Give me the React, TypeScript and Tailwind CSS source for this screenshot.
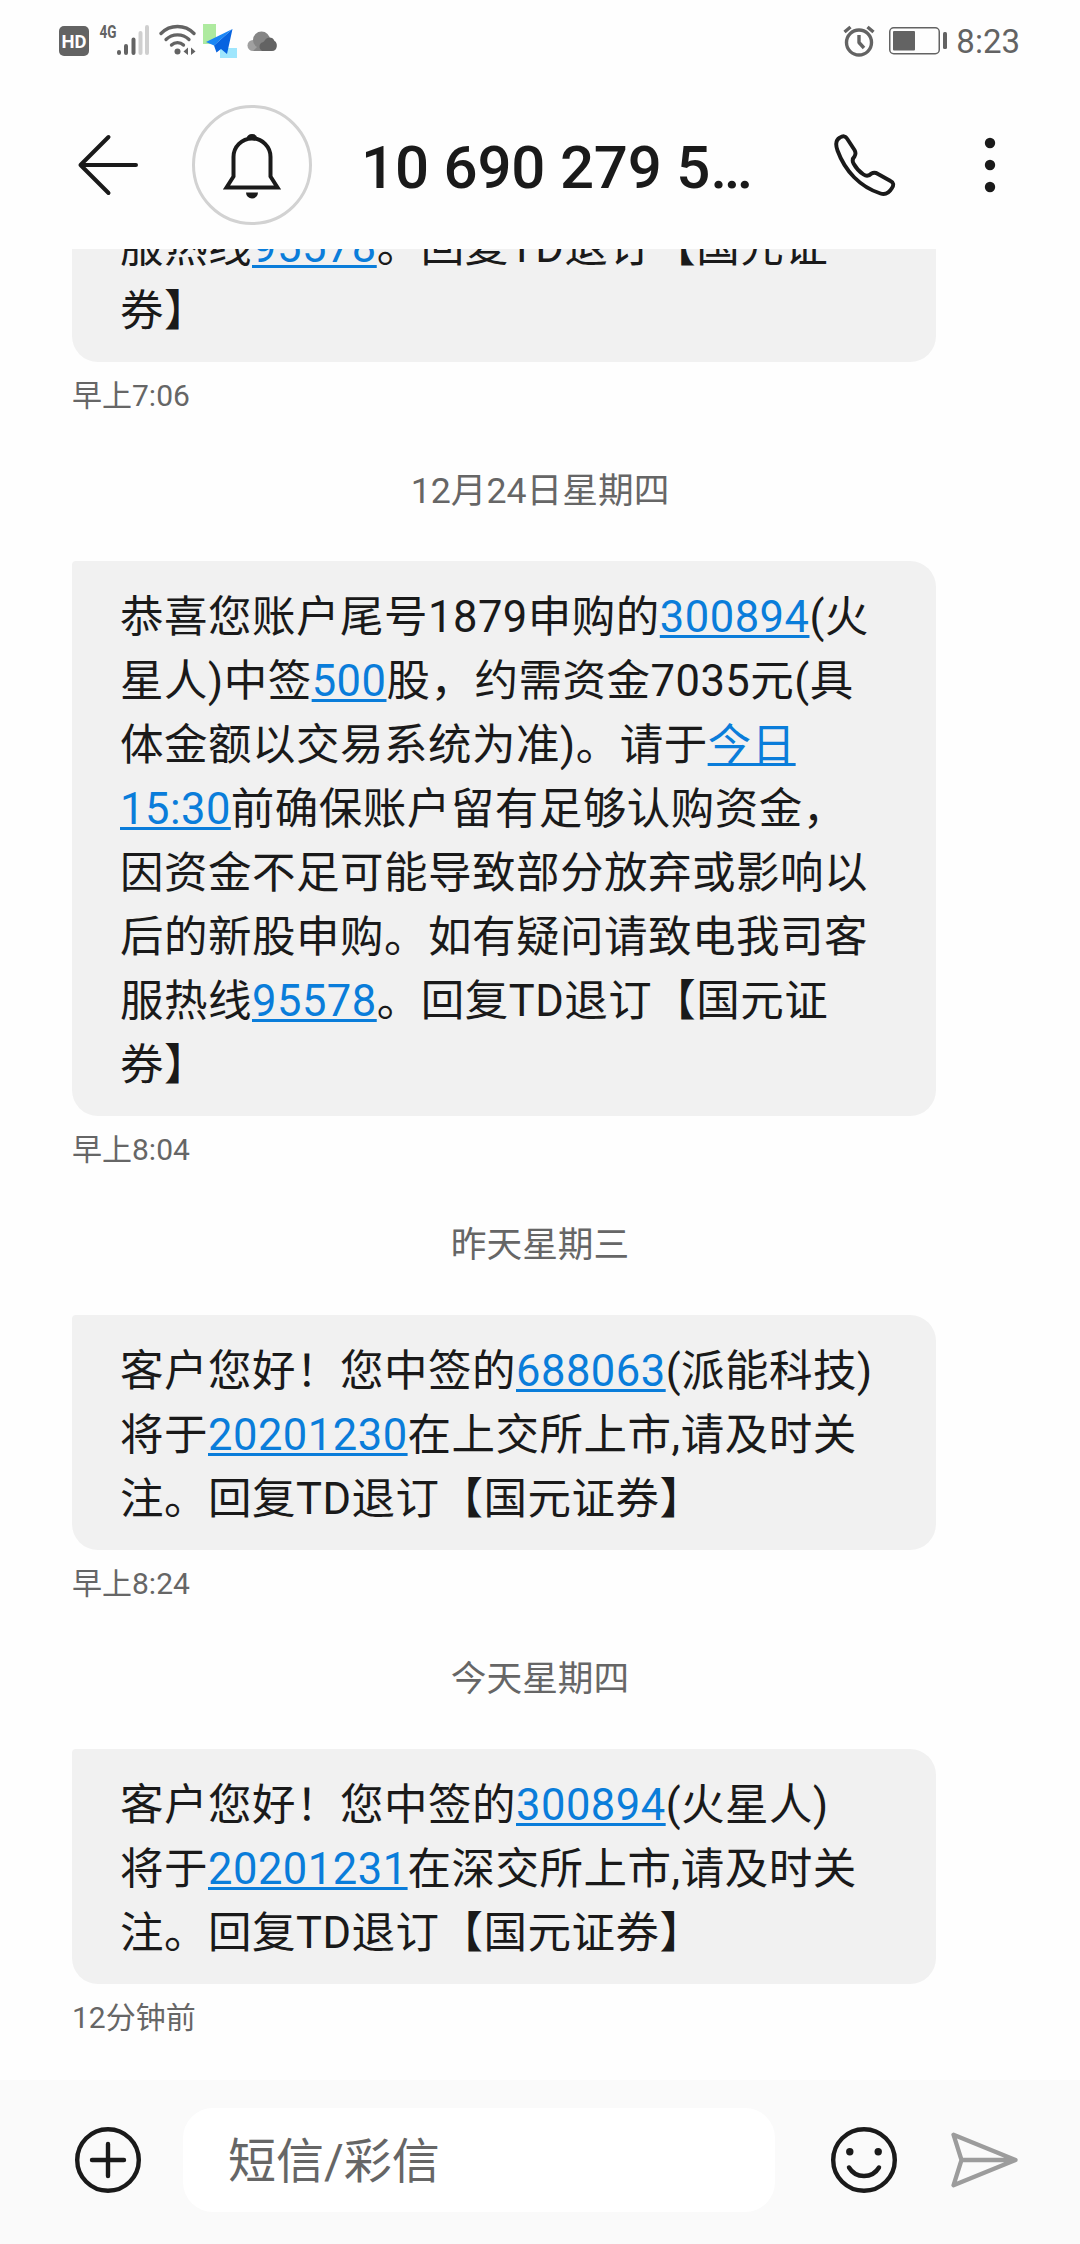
import { Fragment } from "react";

interface Segment {
  text: string;
  link?: boolean;
}

interface Message {
  id: string;
  date?: string;
  lines: Segment[][];
  time: string;
}

const t = (text: string): Segment => ({ text });
const link = (text: string): Segment => ({ text, link: true });

const messages: Message[] = [
  {
    id: "m1",
    lines: [
      [t("服热线"), link("95578"), t("。回复TD退订【国元证")],
      [t("券】")],
    ],
    time: "早上7:06",
  },
  {
    id: "m2",
    date: "12月24日星期四",
    lines: [
      [t("恭喜您账户尾号1879申购的"), link("300894"), t("(火")],
      [t("星人)中签"), link("500"), t("股，约需资金7035元(具")],
      [t("体金额以交易系统为准)。请于"), link("今日")],
      [link("15:30"), t("前确保账户留有足够认购资金，")],
      [t("因资金不足可能导致部分放弃或影响以")],
      [t("后的新股申购。如有疑问请致电我司客")],
      [t("服热线"), link("95578"), t("。回复TD退订【国元证")],
      [t("券】")],
    ],
    time: "早上8:04",
  },
  {
    id: "m3",
    date: "昨天星期三",
    lines: [
      [t("客户您好！您中签的"), link("688063"), t("(派能科技)")],
      [t("将于"), link("20201230"), t("在上交所上市,请及时关")],
      [t("注。回复TD退订【国元证券】")],
    ],
    time: "早上8:24",
  },
  {
    id: "m4",
    date: "今天星期四",
    lines: [
      [t("客户您好！您中签的"), link("300894"), t("(火星人)")],
      [t("将于"), link("20201231"), t("在深交所上市,请及时关")],
      [t("注。回复TD退订【国元证券】")],
    ],
    time: "12分钟前",
  },
];

const SignalIcon = () => (
  <svg className="w-[50px] h-[32px] ml-[10px] overflow-visible" viewBox="0 0 50 32">
    <text
      x="0.5"
      y="14"
      fontSize="18"
      fontWeight="700"
      fill="#636363"
      textLength="17"
      lengthAdjust="spacingAndGlyphs"
    >
      4G
    </text>
    <g strokeWidth="4" strokeLinecap="round" stroke="#636363">
      <path d="M20 28v1M27 22v7M34.5 15.500v13.500" />
      <path d="M41.500 9v20M48 3v26" stroke="#cfcfcf" />
    </g>
  </svg>
);

const WifiIcon = () => (
  <svg className="w-[38px] h-[32px] ml-[10px]" viewBox="0 0 38 32" fill="none">
    <g stroke="#636363" strokeWidth="3.300" strokeLinecap="round">
      <path d="M2 9.500a23 23 0 0 1 33 0" />
      <path d="M7 15.500a16.500 16.500 0 0 1 23 0" />
      <path d="M12.500 21a8.800 8.800 0 0 1 12 0" />
    </g>
    <circle cx="18.500" cy="27.500" r="3" fill="#636363" />
    <path d="M29 23.500v7.500l-4.500-3.500zM32 23.500v7.500l4.500-3.500z" fill="#636363" />
  </svg>
);

const PlaneIcon = () => (
  <svg className="w-[35px] h-[35px] ml-[6px]" viewBox="0 0 35 35">
    <path d="M0 0h13v20H0z" fill="#aeea9f" />
    <path d="M17 24h17v10H17z" fill="#9fe6fd" />
    <path d="M29.500 5L3 18l8 3.500z" fill="#1a86f5" />
    <path d="M29.500 5L11 21.500l2.500 7 4.500-3.500 6 5z" fill="#0763e0" />
  </svg>
);

const CloudIcon = () => (
  <svg className="w-[31px] h-[22px] ml-[9px]" viewBox="0 0 31 22">
    <circle cx="6" cy="14.500" r="5.500" fill="#a0a0a0" />
    <circle cx="14.500" cy="9" r="8.500" fill="#858585" />
    <path d="M6 20l8-8h10v8z" fill="#858585" />
    <path
      d="M15 20a5 5 0 0 1-1-8c1.500-1 3-1 4-3 2-3.500 8-3.500 9.500 1 3.500 1.500 3.500 10-2.500 10z"
      fill="#636363"
    />
  </svg>
);

const AlarmIcon = () => (
  <svg
    className="w-[32px] h-[32px]"
    viewBox="0 0 32 32"
    fill="none"
    stroke="#636363"
    strokeWidth="3.400"
  >
    <circle cx="16" cy="17.500" r="12.500" />
    <path d="M16 10v7.500l5 5.500" strokeLinejoin="round" />
    <path d="M1.500 7l6-5M30.500 7l-6-5" />
  </svg>
);

const BatteryIcon = () => (
  <svg className="w-[58px] h-[28px] ml-[14px]" viewBox="0 0 58 28">
    <rect
      x="0.750"
      y="0.750"
      width="49.500"
      height="26"
      rx="4"
      fill="none"
      stroke="#636363"
      strokeWidth="1.500"
    />
    <rect x="4" y="4" width="22" height="19.500" rx="1" fill="#636363" />
    <rect x="54" y="5" width="4" height="17" rx="1.500" fill="#636363" />
  </svg>
);

const StatusBar = () => (
  <div className="flex h-[80px] shrink-0 items-start justify-between pt-[24px] pl-[59px] pr-[60px]">
    <div className="flex items-start">
      <svg className="mt-[2px] w-[30px] h-[30px]" viewBox="0 0 30 30">
        <rect width="30" height="30" rx="5" fill="#636363" />
        <text
          x="2.500"
          y="21.500"
          fontSize="18"
          fontWeight="700"
          fill="#fff"
          textLength="25"
          lengthAdjust="spacingAndGlyphs"
        >
          HD
        </text>
      </svg>
      <SignalIcon />
      <WifiIcon />
      <PlaneIcon />
      <div className="pt-[7px]">
        <CloudIcon />
      </div>
    </div>
    <div className="flex h-[34px] items-center">
      <AlarmIcon />
      <BatteryIcon />
      <span className="ml-[9px] pt-[1px] text-[33px] leading-[34px] text-[#636363]">
        8:23
      </span>
    </div>
  </div>
);

const Header = () => (
  <header className="flex h-[169px] shrink-0 items-center pl-[76px] pr-[80px]">
    <svg
      className="w-[64px] h-[64px]"
      viewBox="0 0 64 64"
      fill="none"
      stroke="#1a1a1a"
      strokeWidth="4"
      strokeLinecap="round"
      strokeLinejoin="round"
    >
      <path d="M32.500 4L4.500 32l28 28M4.500 32H60" />
    </svg>
    <div className="ml-[52px] flex h-[120px] w-[120px] items-center justify-center rounded-full border-[3px] border-[#d2d2d2]">
      <svg className="w-[60px] h-[68px]" viewBox="0 0 60 68" fill="none">
        <path
          d="M4.500 56.500L11.500 45.500V26a18.500 18.500 0 0 1 37 0v19.500L55.500 56.500z"
          stroke="#1a1a1a"
          strokeWidth="4"
        />
        <path d="M24.500 7.500a5.600 5.600 0 0 1 11 0zM24 61.500h12a6 6 0 0 1-12 0z" fill="#1a1a1a" />
      </svg>
    </div>
    <h1 className="ml-[49px] w-[420px] whitespace-nowrap pt-[6px] text-[60px] font-medium leading-[70px] tracking-[-0.2px] text-[#1a1a1a]">
      10 690 279 5…
    </h1>
    <svg
      className="ml-[52px] w-[64px] h-[64px]"
      viewBox="0 0 64 64"
      fill="none"
      stroke="#1a1a1a"
      strokeWidth="3.900"
      strokeLinejoin="round"
    >
      <path d="M7 4.500C2.500 7 2.500 12 4.500 17.500C12 38 27 54 47.500 60.500C52 62 56 60 59 55C61 52 60.500 49.500 57.500 48L45 41C42.500 39.500 40.500 39.500 38.500 40.500C36 43 33.500 43.500 30.500 41.500C26 38.500 23 35 20.500 30.500C19 27.500 19.500 25.500 21.500 23.500C23 21 23 19.500 21.500 17L14 5.500C12.500 3 10 2.500 7 4.500z" />
    </svg>
    <svg className="ml-auto w-[20px] h-[56px]" viewBox="0 0 20 56" fill="#1a1a1a">
      <circle cx="10" cy="6" r="5.200" />
      <circle cx="10" cy="28" r="5.200" />
      <circle cx="10" cy="50" r="5.200" />
    </svg>
  </header>
);

const Bubble = ({ lines }: { lines: Segment[][] }) => (
  <div className="w-[864px] shrink-0 rounded-[26px] rounded-tl-[4px] bg-[#f1f1f1] pt-[25px] pb-[18px] pl-[48px] text-[43.5px] leading-[64px] tracking-[0.5px] text-[#1a1a1a]">
    {lines.map((line, i) => (
      <p key={i} className="whitespace-nowrap">
        {line.map((seg, j) =>
          seg.link ? (
            <span
              key={j}
              className="text-[#0a7dda] underline decoration-[3px] underline-offset-[3px] [text-decoration-skip-ink:none]"
            >
              {seg.text}
            </span>
          ) : (
            <Fragment key={j}>{seg.text}</Fragment>
          )
        )}
      </p>
    ))}
  </div>
);

const Composer = () => (
  <footer className="flex h-[164px] shrink-0 items-center bg-[#fafafa] pl-[74px] pr-[60px]">
    <svg
      className="mt-[-4px] w-[68px] h-[68px]"
      viewBox="0 0 68 68"
      fill="none"
      stroke="#1a1a1a"
      strokeWidth="4.400"
      strokeLinecap="round"
    >
      <circle cx="34" cy="34" r="30.800" />
      <path d="M34 18v32M18 34h32" />
    </svg>
    <div className="mt-[-4px] ml-[41px] h-[104px] w-[592px] rounded-[30px] bg-white pt-[3px] pl-[45px] text-[48px] leading-[101px] text-[#666]">
      短信/彩信
    </div>
    <svg
      className="mt-[-4px] ml-[55px] w-[68px] h-[68px]"
      viewBox="0 0 68 68"
      fill="none"
      stroke="#1a1a1a"
      strokeWidth="4.400"
      strokeLinecap="round"
    >
      <circle cx="34" cy="34" r="30.800" />
      <path d="M19 41.500a17.500 17.500 0 0 0 30 0" />
      <circle cx="19.800" cy="25.800" r="3.700" fill="#1a1a1a" stroke="none" />
      <circle cx="48.200" cy="25.800" r="3.700" fill="#1a1a1a" stroke="none" />
    </svg>
    <svg
      className="mt-[-4px] ml-auto w-[72px] h-[60px]"
      viewBox="0 0 72 60"
      fill="none"
      stroke="#9c9c9c"
      strokeWidth="4.300"
      strokeLinejoin="round"
      strokeLinecap="round"
    >
      <path d="M5.500 4.700L67.500 30L5.500 55.300L13.500 30zM13.500 30h54" />
    </svg>
  </footer>
);

const App = () => (
  <div
    lang="zh-CN"
    className="flex h-[2244px] w-[1080px] flex-col overflow-hidden bg-[#fefefe] font-[Roboto,'Noto_Sans_CJK_SC',sans-serif]"
  >
    <StatusBar />
    <Header />
    {/* Conversation is anchored to its newest message, older ones run off the top */}
    <main className="flex flex-1 flex-col justify-end overflow-hidden pl-[72px] pb-[42px]">
      {messages.map((message) => (
        <Fragment key={message.id}>
          {message.date && (
            <div className="mt-[51px] mb-[46px] w-[936px] shrink-0 text-center text-[35.7px] leading-[48px] text-[#666]">
              {message.date}
            </div>
          )}
          <Bubble lines={message.lines} />
          <div className="mt-[14px] shrink-0 text-[30px] leading-[40px] text-[#666]">
            {message.time}
          </div>
        </Fragment>
      ))}
    </main>
    <Composer />
  </div>
);

export default App;
